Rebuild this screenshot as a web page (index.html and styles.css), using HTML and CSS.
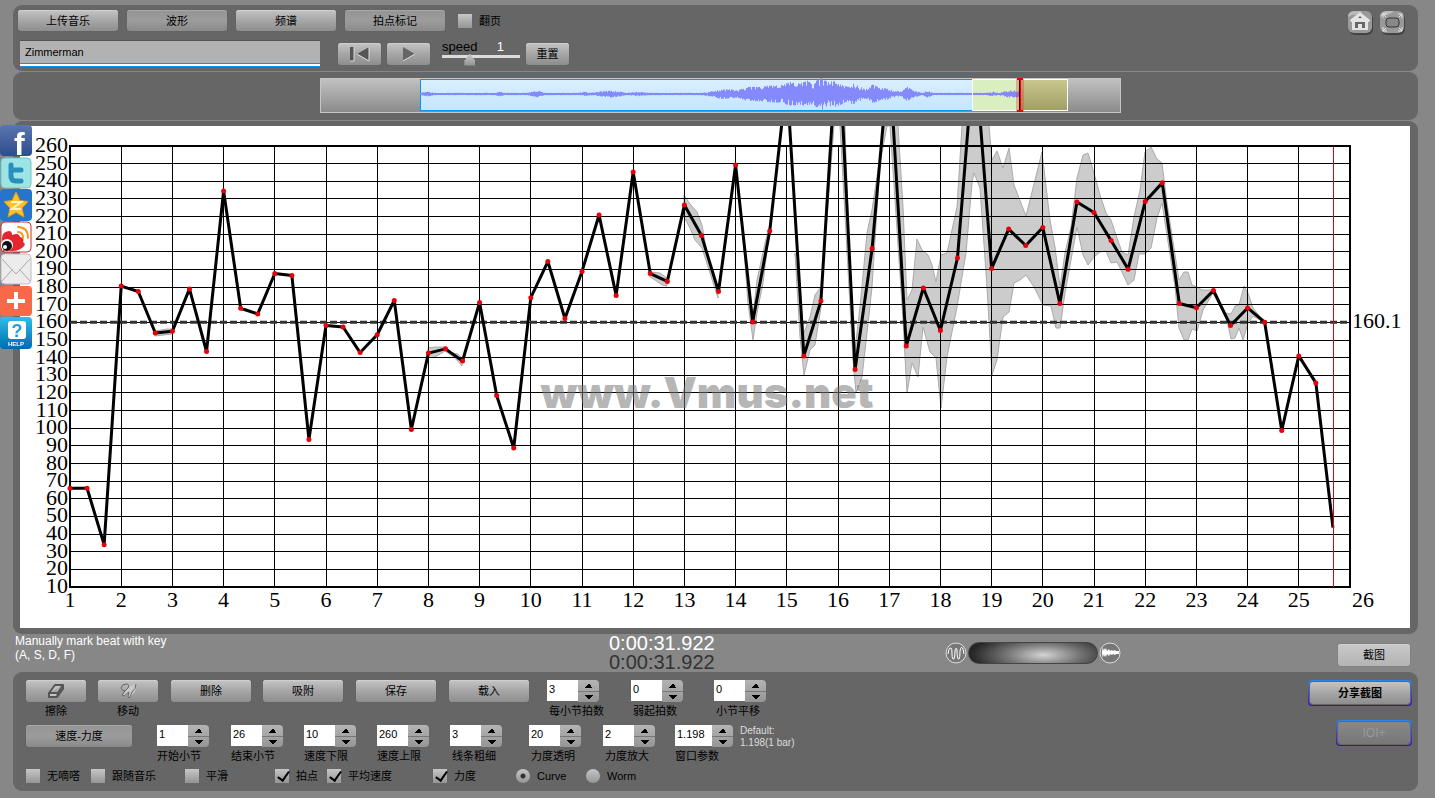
FILE: index.html
```html
<!DOCTYPE html>
<html lang="zh-CN">
<head>
  <meta charset="UTF-8" />
  <meta name="viewport" content="width=device-width, initial-scale=1.0"/>
  <title>Vmus.net</title>
  <link rel="stylesheet" href="styles.css">
</head>
<body>
  <nav class="share">
    <a href="#" aria-label="Facebook">
      <svg viewBox="0 0 32 32">
        <defs><linearGradient id="gFb" x2="0" y2="1"><stop offset="0" stop-color="#5a76b0"/><stop offset="1" stop-color="#2f4c8c"/></linearGradient></defs>
        <rect width="32" height="31" rx="4" fill="url(#gFb)"/>
        <text x="14" y="30" class="logo-f">f</text>
      </svg>
    </a>
    <a href="#" aria-label="Twitter">
      <svg viewBox="0 0 32 32">
        <rect x="1" y="1" width="30" height="30" rx="4" fill="#9ce4e6" stroke="#72c4cc"/>
        <path d="M11 8v11q0 5 5 5h5M11 13h10" fill="none" stroke="#2a8fbd" stroke-width="5" stroke-linecap="round"/>
      </svg>
    </a>
    <a href="#" aria-label="Qzone">
      <svg viewBox="0 0 32 32">
        <rect width="32" height="32" rx="4" fill="#2674cb"/>
        <path d="M16 3l4 8.500 8 1-6 6.500 2 9-8-4.500-8 4.500 2-9-6-6.500 8-1z" fill="#fdc32d" stroke="#e39a12"/>
        <path d="M11 13h10l-9 7h9" fill="none" stroke="#fff3c4" stroke-width="2"/>
      </svg>
    </a>
    <a href="#" aria-label="Weibo">
      <svg viewBox="0 0 32 32">
        <rect x="1" y="1" width="30" height="30" rx="4" fill="#fff" stroke="#c9302c"/>
        <path d="M2 17q0-6 7-7 3 0 3 4 7-3 8 2 5 1 3 5 3 2 1 4-4 5-12 5H3z" fill="#e3262d"/>
        <ellipse cx="7" cy="24" rx="6" ry="6" fill="#fff"/>
        <circle cx="7" cy="25" r="5" fill="#111"/>
        <circle cx="5" cy="26" r="2" fill="#fff"/>
        <path d="M18 6q10 0 10 11M18 11q5 0 5 6" fill="none" stroke="#f39a1e" stroke-width="2" stroke-linecap="round"/>
      </svg>
    </a>
    <a href="#" aria-label="Email">
      <svg viewBox="0 0 32 32">
        <rect x="1" y="1" width="30" height="30" rx="4" fill="#ececec" stroke="#bdbdbd"/>
        <path d="M2 6l14 15L30 6M2 28l10-11M30 28L20 17" fill="none" stroke="#a9a9a9"/>
      </svg>
    </a>
    <a href="#" aria-label="More">
      <svg viewBox="0 0 32 32">
        <rect y="1" width="32" height="30" rx="4" fill="#f8694a"/>
        <path d="M16 7v17M7 16h18" stroke="#fff" stroke-width="4"/>
      </svg>
    </a>
    <a href="#" aria-label="Help">
      <svg viewBox="0 0 32 32">
        <defs><linearGradient id="gHelp" x2="0" y2="1"><stop offset="0" stop-color="#2bc0ea"/><stop offset="1" stop-color="#0468ad"/></linearGradient></defs>
        <rect width="32" height="32" rx="4" fill="url(#gHelp)"/>
        <rect x="8" y="4" width="18" height="18" rx="3" fill="#fff"/>
        <text x="17" y="20" class="logo-q">?</text>
        <text x="16" y="29" class="logo-help">HELP</text>
      </svg>
    </a>
  </nav>

  <header class="panel toolbar">
    <div class="toolbar-rows">
      <div class="row tabs">
        <button class="btn">上传音乐</button>
        <button class="btn on">波形</button>
        <button class="btn">频谱</button>
        <button class="btn on">拍点标记</button>
        <label class="check"><input type="checkbox">翻页</label>
      </div>
      <div class="row player">
        <input class="track-name" type="text" value="Zimmerman" aria-label="Track">
        <button class="btn icon-btn" aria-label="Rewind">
          <svg width="24" height="18" viewBox="0 0 24 18"><path d="M2 2h4v14H2zM21 2v14L9 9z" fill="#555"/><path d="M21 2v14L9 9M6 2v14H2" stroke="#ddd" fill="none"/></svg>
        </button>
        <button class="btn icon-btn" aria-label="Play">
          <svg width="24" height="18" viewBox="0 0 24 18"><path d="M6 2v14l12-7z" fill="#666"/><path d="M6 16l12-7" stroke="#ddd"/></svg>
        </button>
        <div class="speed">
          <label for="speed">speed <output>1</output></label>
          <input id="speed" type="range" min="0" max="3" value="1">
        </div>
        <button class="btn icon-btn">重置</button>
      </div>
    </div>
    <div class="corner">
      <a href="#" aria-label="Home">
        <svg viewBox="0 0 26 26">
          <rect x="2" y="3" width="24" height="22" rx="6" fill="#444"/>
          <rect x="1" y="1" width="24" height="22" rx="6" fill="#999"/>
          <path d="M1 7q0-6 7-6h7q-4 4-10 4z" fill="#bbb"/>
          <path d="M13 2l10 8-1 2h-1v8H5v-8H4l-1-2z" fill="#e4e4e4"/>
          <path d="M8 18v-6h10v6h-3v-4h-4v4zM11 8l2-2 2 2z" fill="#666"/>
        </svg>
      </a>
      <a href="#" aria-label="Fullscreen">
        <svg viewBox="0 0 26 26">
          <rect x="2" y="3" width="24" height="22" rx="6" fill="#444"/>
          <rect x="1" y="1" width="24" height="22" rx="6" fill="#999"/>
          <path d="M1 7q0-6 7-6h7q-4 4-10 4z" fill="#bbb"/>
          <rect x="7" y="8" width="13" height="9" rx="3" fill="#888" stroke="#333"/>
          <path d="M4 8V4h4M4 4l3 3M19 4h4v4M23 4l-3 3M4 17v4h4M4 21l3-3M19 21h4v-4M23 21l-3-3" fill="none" stroke="#e4e4e4"/>
        </svg>
      </a>
    </div>
  </header>

  <section class="panel overview">
    <svg class="wave" viewBox="0 0 801 35">
      <defs>
        <linearGradient id="gGrey" x2="0" y2="1"><stop offset="0" stop-color="#c2c2c2"/><stop offset="1" stop-color="#8a8a8a"/></linearGradient>
        <linearGradient id="gBlue" x2="0" y2="1"><stop offset="0" stop-color="#d9effe"/><stop offset="1" stop-color="#c4e6ff"/></linearGradient>
        <linearGradient id="gOlive" x2="0" y2="1"><stop offset="0" stop-color="#c9c88f"/><stop offset="1" stop-color="#a09e62"/></linearGradient>
      </defs>
      <rect x="0.500" y="0.500" width="800" height="34" fill="url(#gGrey)" stroke="#c6c6c6"/>
      <rect x="100.500" y="1.500" width="599" height="31" fill="url(#gBlue)" stroke="#0a95ee"/>
      <rect x="652" y="1" width="48" height="32" fill="#d9efc0"/>
      <rect x="700" y="1" width="48" height="32" fill="url(#gOlive)"/>
      <path id="wave" stroke="#8489fb" fill="none"/>
      <rect x="652.500" y="1.500" width="95" height="31" fill="none" stroke="#fff"/>
      <rect x="696" y="1" width="8" height="33" fill="#e33" opacity="0.350"/>
      <path d="M699.500 1v32" stroke="#311" />
      <path d="M700.500 1v32" stroke="#e00"/>
      <path d="M697 1h6M697 33h6" stroke="#e00" stroke-width="2"/>
    </svg>
  </section>

  <main class="panel chart-panel">
    <svg id="chart" class="chart" viewBox="0 0 1390 502">
      <g class="band">
        <path d="M135 205L147 203 152 203 152 208 135 210z"/>
        <path d="M408 222L415 221 425 221 432 227 438 228 442 232 442 240 435 232 425 225 415 231 408 232z"/>
        <path d="M630 146L640 147 647 152 647 160 642 159 635 154 630 151z"/>
        <path d="M664 69L670 78 677 86 682 99 687 127 698 164 698 172 688 141 682 122 675 114 670 102 664 91z"/>
        <path d="M733 190L737 154 742 131 745 117 749 102 749 109 743 157 737 187 733 214 728 177 723 111z"/>
        <path d="M784 207L790 191 795 169 801 161 801 181 795 219 790 224 784 249 780 211 775 127z"/>
        <path d="M811 0L801 170 814 0zM820 0L833 234 825 0z"/>
        <path d="M835 224L840 181 847 107 852 84 862 17 864 0 864 -8 878 -8 878 0 883 81 887 174 892 164 897 113 902 124 908 129 912 139 916 156 921 129 927 127 932 104 937 81 942 0 942 -8 969 -8 969 0 972 34 977 25 983 42 989 22 994 59 1006 90 1022 26 1030 94 1035 121 1040 161 1045 127 1051 101 1057 52 1063 29 1068 27 1074 47 1080 69 1086 87 1091 94 1097 112 1102 126 1108 129 1114 91 1120 64 1125 26 1131 21 1137 33 1142 37 1147 77 1159 154 1164 146 1168 146 1172 159 1177 161 1182 164 1193 164 1205 187 1211 188 1215 180 1219 179 1224 160 1228 167 1233 182 1245 197 1233 190 1228 197 1223 214 1219 202 1215 212 1211 213 1207 194 1193 167 1183 184 1177 205 1172 203 1168 214 1164 214 1159 202 1155 161 1142 77 1137 92 1131 122 1125 128 1119 128 1114 154 1108 159 1102 146 1097 136 1091 137 1086 125 1080 126 1074 131 1068 139 1063 129 1057 101 1051 134 1045 167 1040 202 1036 202 1031 180 1023 179 1014 161 1006 149 1000 154 994 157 989 186 983 191 977 234 972 249 967 161 960 62 954 47 952 57 946 127 937 181 927 231 921 282 916 232 910 226 903 201 898 251 892 237 887 267 883 194 877 104 870 0 867 0 860 37 852 161 847 207 842 251 836 267 833 234z"/>
      </g>
      <g id="grid" class="grid"></g>
      <g id="labels" class="labels"></g>
      <path id="mean" class="mean"/>
      <path id="tempo" class="tempo"/>
      <g id="beats" class="beats"></g>
      <path class="playhead" d="M1313.500 21v440"/>
      <text class="watermark" x="687" y="282">www.Vmus.net</text>
    </svg>
  </main>

  <section class="status">
    <p class="hint">Manually mark beat with key<br>(A, S, D, F)</p>
    <div class="clock">
      <div>0:00:31.922</div>
      <div class="clock-total">0:00:31.922</div>
    </div>
    <div class="zoomer">
      <svg width="22" height="22" viewBox="0 0 22 22"><circle cx="11" cy="11" r="10" fill="#777" stroke="#ddd"/><path d="M3 12q1-7 3-6 1 0 1 6t2 5q1-2 1-8 1-5 2-1 0 10 2 9 1-1 1-8 1-6 3-2l1 5" fill="none" stroke="#fff"/></svg>
      <div class="wheel"></div>
      <svg width="22" height="22" viewBox="0 0 22 22"><circle cx="11" cy="11" r="10" fill="#777" stroke="#ddd"/><path d="M3 5l1 4 1-3 1 2 1-2 1 3 2-2 1 2 2-1 1 1 2-1 1 1h3v3h-3l-1 1-2-1-1 1-2-1-1 2-2-2-1 3-1-2-1 2-1-3-1 4z" fill="#fff"/></svg>
    </div>
    <button class="btn shot">截图</button>
  </section>

  <footer class="panel controls">
    <div class="control-rows">
      <div class="line-edit">
        <div class="tool">
          <button class="btn" id="erase" aria-labelledby="eraseLabel"><svg width="18" height="16" viewBox="0 0 18 16"><path d="M2 10L8 2h8l-5 8zM2 10v4h8l6-8V2M11 10l-1 4" fill="#c4c4c4" stroke="#555" stroke-width="2" stroke-linejoin="round"/></svg></button>
          <span id="eraseLabel">擦除</span>
        </div>
        <div class="tool">
          <button class="btn" id="move" aria-labelledby="moveLabel"><svg width="18" height="16" viewBox="0 0 18 16"><path d="M7 7l4-4 6-2q1 6-3 10l-4 4-1-2 1-4-4 4-2-1z" fill="#c8c8c8"/><path d="M2 5q1-4 5-4t2 4l-3 3M2 5q1 3 4 3l-3 4 2 1 5-4-1 5q1 2 2 0l2-5q4-3 4-8" fill="none" stroke="#666"/></svg></button>
          <span id="moveLabel">移动</span>
        </div>
        <button class="btn wide">删除</button>
        <button class="btn wide">吸附</button>
        <button class="btn wide">保存</button>
        <button class="btn wide">载入</button>
        <label class="spin inset"><span class="box"><input type="text" value="3"><i></i></span><span>每小节拍数</span></label>
        <label class="spin inset"><span class="box"><input type="text" value="0"><i></i></span><span>弱起拍数</span></label>
        <label class="spin inset"><span class="box"><input type="text" value="0"><i></i></span><span>小节平移</span></label>
      </div>
      <div class="line-params">
        <button class="btn on mode">速度-力度</button>
        <label class="spin"><span class="box"><input type="text" value="1"><i></i></span>开始小节</label>
        <label class="spin"><span class="box"><input type="text" value="26"><i></i></span>结束小节</label>
        <label class="spin"><span class="box"><input type="text" value="10"><i></i></span>速度下限</label>
        <label class="spin"><span class="box"><input type="text" value="260"><i></i></span>速度上限</label>
        <label class="spin inset"><span class="box"><input type="text" value="3"><i></i></span><span>线条粗细</span></label>
        <label class="spin inset"><span class="box"><input type="text" value="20"><i></i></span><span>力度透明</span></label>
        <label class="spin inset"><span class="box"><input type="text" value="2"><i></i></span><span>力度放大</span></label>
        <label class="spin long"><span class="box"><input type="text" value="1.198"><i></i></span>窗口参数</label>
        <p class="default">Default:<br>1.198(1 bar)</p>
      </div>
      <div class="line-options">
        <label class="check"><input type="checkbox">无嘀嗒</label>
        <label class="check"><input type="checkbox">跟随音乐</label>
        <label class="check"><input type="checkbox">平滑</label>
        <label class="check"><input type="checkbox" checked>拍点</label>
        <label class="check"><input type="checkbox" checked>平均速度</label>
        <label class="check"><input type="checkbox" checked>力度</label>
        <label class="check"><input type="radio" name="view" checked>Curve</label>
        <label class="check"><input type="radio" name="view">Worm</label>
      </div>
    </div>
    <div class="actions">
      <div class="ring"><button class="btn share-shot">分享截图</button></div>
      <div class="ring"><button class="btn ioi" disabled>IOI+</button></div>
    </div>
  </footer>

  <script src="script.js"></script>
</body>
</html>
```
FILE: styles.css
```css
* {
  box-sizing: border-box;
}

body {
  font-family: "Liberation Sans", "Noto Sans CJK SC", sans-serif;
  font-size: 11px;
  line-height: 14px;
  margin: 0;
  padding: 5px 17px 7px 13px;
  background: #878787;
  color: #000;
}

p {
  margin: 0;
}

svg {
  display: block;
}

button,
input {
  font: inherit;
  color: inherit;
  margin: 0;
}

.panel {
  background: #666;
  border-radius: 9px;
  margin-bottom: 1px;
}

.btn {
  height: 22px;
  padding: 0;
  border: 0;
  border-radius: 3px;
  background: linear-gradient(#c4c4c4, #a6a6a6 50%, #8e8e8e);
  box-shadow: 0 0 1px #555, inset 0 1px 0 #d0d0d0;
  display: flex;
  align-items: center;
  justify-content: center;
}

.btn.on {
  background: linear-gradient(#949494, #9c9c9c 50%, #8a8a8a);
  box-shadow: 0 0 1px #555, inset 0 1px 0 #a8a8a8;
}

/* share bar */
.share {
  position: fixed;
  left: 0;
  top: 125px;
  width: 32px;
}

.share svg {
  width: 32px;
  height: 32px;
}

.logo-f {
  font: bold 32px "Liberation Sans", sans-serif;
  fill: #fff;
}

.logo-q {
  font: bold 18px "Liberation Sans", sans-serif;
  fill: #1ba3d6;
  text-anchor: middle;
}

.logo-help {
  font: bold 6px "Liberation Sans", sans-serif;
  fill: #fff;
  text-anchor: middle;
}

/* top toolbar */
.toolbar {
  display: flex;
  justify-content: space-between;
  padding: 5px 13px 4px 5px;
}

.toolbar-rows {
  display: flex;
  flex-direction: column;
  gap: 9px;
}

.row {
  display: flex;
  align-items: center;
}

.tabs {
  gap: 9px;
  height: 21px;
}

.tabs .btn {
  width: 100px;
  height: 21px;
}

.tabs .check {
  margin-left: 4px;
}

.player {
  height: 27px;
  padding-left: 2px;
}

.track-name {
  width: 300px;
  height: 27px;
  margin-right: 18px;
  padding: 0 5px 4px;
  border: 0;
  border-top: 1px solid #555;
  background: linear-gradient(#b2b2b2 22px, #0b93ea 22px, #0b93ea 23px, #fff 23px, #fff 25px, #0b93ea 25px);
}

.icon-btn {
  width: 43px;
  margin-right: 6px;
}

.speed {
  width: 78px;
  margin: 0 6px 0 6px;
}

.speed label {
  display: flex;
  justify-content: space-between;
  padding-right: 16px;
  font-size: 13px;
  line-height: 12px;
}

.speed output {
  color: #fff;
}

.speed input {
  appearance: none;
  display: block;
  width: 100%;
  height: 14px;
  background: linear-gradient(#dcdcdc, #dcdcdc) 0 2px / 100% 3px no-repeat;
}

.speed input::-webkit-slider-thumb {
  appearance: none;
  width: 11px;
  height: 12px;
  background: linear-gradient(#c8c8c8, #929292);
  clip-path: polygon(50% 0, 100% 60%, 100% 100%, 0 100%, 0 60%);
}

.corner {
  display: flex;
  gap: 6px;
}

.corner svg {
  width: 26px;
  height: 26px;
}

/* waveform overview */
.overview {
  padding: 6px 0 7px 10px;
}

.wave {
  width: 57%;
  min-width: 801px;
  height: 35px;
  margin: 0 auto;
}

/* tempo chart */
.chart-panel {
  padding: 5px 8px 6px 7px;
  margin-bottom: 0;
}

.chart {
  width: 100%;
  background: #fff;
}

.band {
  fill: #ccc;
  stroke: #aaa;
}

.grid {
  stroke: #000;
  fill: none;
  shape-rendering: crispEdges;
}

.grid .frame {
  stroke-width: 2;
}

.labels {
  font: 22px "Liberation Serif", serif;
  text-anchor: middle;
}

.labels .tick-y {
  text-anchor: end;
}

.labels .tick-mean {
  text-anchor: start;
}

.mean {
  stroke: #333;
  stroke-width: 3;
  stroke-dasharray: 7 3;
}

.tempo {
  fill: none;
  stroke: #000;
  stroke-width: 3;
  stroke-linejoin: round;
}

.beats {
  fill: #e6000c;
}

.playhead {
  stroke: #e6000c;
}

.watermark {
  font: 900 42px Inter, sans-serif;
  text-anchor: middle;
  fill: #777;
  fill-opacity: 0.55;
}

/* status line */
.status {
  display: grid;
  grid-template-columns: 594fr 336fr 393fr 72px;
  height: 38px;
  padding: 0 8px 0 2px;
}

.hint {
  color: #fff;
  font-size: 12px;
}

.clock {
  color: #fff;
  font-size: 20px;
  line-height: 19px;
}

.clock-total {
  color: #333;
}

.zoomer {
  display: flex;
  gap: 1px;
  align-items: center;
}

.wheel {
  width: 130px;
  height: 22px;
  border-radius: 11px;
  border: 1px solid #444;
  background: radial-gradient(ellipse 72px 22px at 58% 60%, #d4d4d4, #777 50%, #262626);
}

.shot {
  align-self: center;
  margin-top: 4px;
  background: linear-gradient(#c8c8c8, #b4b4b4);
}

/* bottom controls */
.controls {
  display: flex;
  justify-content: space-between;
  padding: 8px 6px 8px 13px;
  margin-bottom: 0;
}

.control-rows {
  display: flex;
  flex-direction: column;
}

.line-edit,
.line-params,
.line-options {
  display: grid;
  align-items: start;
}

.line-edit {
  grid-template-columns: 72px 73px 92px 93px 93px 98px 84px 83px 60px;
  margin-bottom: 7px;
}

.line-params {
  grid-template-columns: 131px 74px 73px 73px 73px 79px 74px 72px 65px 80px;
  margin-bottom: 6px;
}

.line-options {
  grid-template-columns: 65px 94px 90px 52px 106px 83px 70px 80px;
}

.tool {
  width: 60px;
  text-align: center;
}

.tool .btn {
  width: 60px;
  margin-bottom: 2px;
}

.wide {
  width: 80px;
}

.mode {
  width: 106px;
}

.spin {
  white-space: nowrap;
}

.inset > span:last-child {
  padding-left: 2px;
}

.box {
  display: flex;
  width: 52px;
  height: 22px;
  margin-bottom: 2px;
}

.long .box {
  width: 58px;
}

.box input {
  flex: 1;
  width: 0;
  height: 21px;
  padding: 0 2px 3px;
  border: 0;
  background: #fff;
}

/* stepper arrows */
.box i {
  width: 21px;
  border-radius: 0 4px 4px 0;
  background:
    conic-gradient(from -45deg at 50% 100%, #000 90deg, transparent 0) 50% 15px / 8px 4px no-repeat,
    conic-gradient(from 135deg at 50% 0, #000 90deg, transparent 0) 50% 4px / 8px 4px no-repeat,
    linear-gradient(#777, #777) 0 11px / 100% 1px no-repeat,
    linear-gradient(#b4b4b4, #959595);
}

.default {
  color: #ddd;
  font-size: 10px;
  line-height: 12px;
}

.check {
  display: flex;
  align-items: center;
  gap: 7px;
  white-space: nowrap;
}

.check input {
  appearance: none;
  width: 14px;
  height: 14px;
  background: linear-gradient(#c6c6c6, #959595);
}

.check input[type="checkbox"]:checked {
  position: relative;
}

.check input[type="checkbox"]:checked::after {
  content: "";
  position: absolute;
  left: 5px;
  top: 0;
  width: 5px;
  height: 10px;
  border: solid #000;
  border-width: 0 2px 2px 0;
  transform: rotate(35deg);
}

.check input[type="radio"] {
  border-radius: 50%;
}

.check input[type="radio"]:checked {
  background: radial-gradient(#333 2px, transparent 3px), linear-gradient(#c6c6c6, #959595);
}

.actions {
  display: flex;
  flex-direction: column;
  align-items: flex-end;
  gap: 14px;
}

.ring {
  padding: 2px;
  border-radius: 4px;
  background: linear-gradient(#2a86f0, #3a10b8);
}

.ring .btn {
  box-shadow: 0 0 0 1px #666;
}

.share-shot {
  width: 100px;
  font-weight: bold;
}

.ioi {
  width: 72px;
  font-size: 12px;
  color: #999;
  background: linear-gradient(#888, #777);
}
```
FILE: script.js
```js
const NS = "http://www.w3.org/2000/svg";

// tempo per beat, three beats to the bar
const tempo = [
  66, 66, 34, 180.6, 177.5, 154, 155, 179, 143.5, 234.5, 168, 164.8,
  187.7, 186.6, 93.6, 158.2, 157.4, 142.9, 153, 172.4, 99.3, 142.6, 145, 138.1,
  171.3, 118.6, 88.8, 174, 194.5, 162.2, 188.9, 220.9, 175.3, 245.3, 187.7, 183.2,
  226.6, 209.3, 177.5, 249.2, 160.2, 211.8, 297.7, 141, 172.1, 328, 133.3, 201.9,
  311.3, 146.6, 179.5, 155.4, 196.5, 315.8, 190.6, 212.9, 203.6, 213.8, 170.7, 228.3,
  222.3, 206.4, 190.2, 228.5, 239.1, 170.7, 168.3, 178.1, 158.2, 168.2, 160.1, 98.7,
  141, 125.7, 43.7
];
const mean = 160.1;
const left = 50, right = 1330, top_ = 20, bottom = 461;

const xOf = bar => left + (bar - 1) * (right - left) / 25;
const yOf = v => bottom - (v - 10) * (bottom - top_) / 250;

function add(parent, name, attrs, text) {
  const el = document.createElementNS(NS, name);
  for (const key in attrs) el.setAttribute(key, attrs[key]);
  if (text !== undefined) el.textContent = text;
  document.getElementById(parent).appendChild(el);
}

for (let bar = 1; bar <= 26; bar++) {
  const x = xOf(bar);
  add("grid", "path", { d: `M${x} ${top_}V${bottom}` });
  add("labels", "text", { x: bar === 26 ? x + 13 : x, y: 481 }, bar);
}
for (let v = 10; v <= 260; v += 10) {
  add("grid", "path", { d: `M${left} ${yOf(v)}H${right}` });
  add("labels", "text", { x: 48, y: yOf(v) + 6, class: "tick-y" }, v);
}
add("grid", "rect", { class: "frame", x: left, y: top_, width: right - left, height: bottom - top_ });
add("labels", "text", { x: right + 2, y: yOf(mean) + 6, class: "tick-mean" }, mean);

document.getElementById("mean").setAttribute("d", `M${left} ${yOf(mean)}H${right}`);

const points = tempo.map((v, i) => [xOf(1 + i / 3), yOf(v)]);
document.getElementById("tempo").setAttribute("d", "M" + points.map(p => p.join(" ")).join("L"));
points.slice(0, -1).forEach(p => add("beats", "circle", { cx: p[0], cy: p[1], r: 2.5 }));

// loudness envelope of the recording: position, half height
const envelope = [
  [100, 1], [108, 2], [114, 1], [174, 1], [180, 2], [184, 1], [207, 1], [218, 3], [224, 1],
  [258, 1], [266, 2], [270, 1], [279, 2], [290, 3], [300, 2], [306, 1], [318, 2], [328, 1],
  [380, 1], [390, 2], [400, 4], [410, 4], [417, 3], [427, 6], [437, 6], [447, 7], [453, 7],
  [463, 8], [470, 10], [480, 9], [487, 11], [493, 9], [500, 14], [507, 10], [513, 11],
  [518, 10], [527, 6], [532, 9], [540, 6], [547, 4], [552, 8], [560, 5], [567, 5], [573, 3],
  [580, 2], [587, 6], [593, 3], [602, 1], [607, 3], [613, 1], [650, 1], [665, 1], [673, 2],
  [678, 1], [688, 3], [699, 3]
];
const noise = x => 0.6 + 0.6 * Math.abs(Math.sin(x * x * 0.37));
let d = "";
let k = 0;
for (let x = 100; x < 699; x++) {
  while (envelope[k + 1][0] < x) k++;
  const [x0, a0] = envelope[k];
  const [x1, a1] = envelope[k + 1];
  const amp = a0 + (a1 - a0) * (x - x0) / (x1 - x0);
  const up = Math.max(1, amp * noise(x));
  const down = Math.max(1, amp * noise(x + 31));
  d += `M${x + 0.5} ${16 - up}V${16 + down}`;
}
document.getElementById("wave").setAttribute("d", d);
```
